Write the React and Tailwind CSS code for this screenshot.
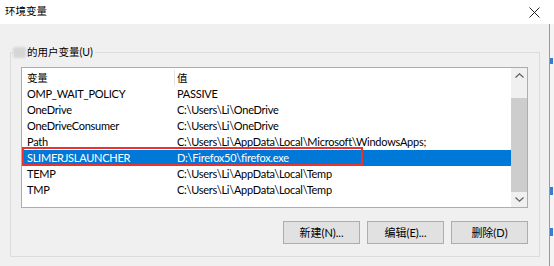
import React from 'react';

const rows = [
  ['OMP_WAIT_POLICY', 'PASSIVE'],
  ['OneDrive', 'C:\\Users\\Li\\OneDrive'],
  ['OneDriveConsumer', 'C:\\Users\\Li\\OneDrive'],
  ['Path', 'C:\\Users\\Li\\AppData\\Local\\Microsoft\\WindowsApps;'],
  ['SLIMERJSLAUNCHER', 'D:\\Firefox50\\firefox.exe'],
  ['TEMP', 'C:\\Users\\Li\\AppData\\Local\\Temp'],
  ['TMP', 'C:\\Users\\Li\\AppData\\Local\\Temp'],
];

function Btn({ children }) {
  return (
    <button className="w-[77px] h-[23px] bg-[#e1e1e1] border border-[#adadad] text-[11px] text-black leading-none">
      {children}
    </button>
  );
}

export default function App() {
  return (
    <div
      className="w-[554px] h-[266px] overflow-hidden flex flex-col bg-white text-black"
      style={{ fontFamily: 'Lato, "Noto Sans CJK SC", sans-serif' }}
    >
      {/* title bar */}
      <div className="h-[24px] flex items-center justify-between pl-[5px] pr-[14px] bg-white shrink-0">
        <span className="text-[10.5px]">环境变量</span>
        <svg width="11" height="11" viewBox="0 0 11 11" className="mt-[1px]">
          <path d="M0.5 0.5 L10.5 10.5 M10.5 0.5 L0.5 10.5" stroke="#222" strokeWidth="1" fill="none" />
        </svg>
      </div>

      <div className="flex flex-1">
        <div className="flex-1 bg-[#f0f0f0] pl-[10px] pr-[8px] pt-[28px]">
          {/* group box */}
          <div className="relative border border-[#dcdcdc] h-[205px] w-[530px] pl-[10px] pt-[14px]">
            <div className="absolute left-[2px] top-[-8px] flex items-center bg-[#f0f0f0] pr-[2px]">
              <span className="w-[13px] h-[11px] bg-[#d6d6d6] blur-[1px] rounded-[2px]" />
              <span className="text-[10.5px] leading-[14px] ml-[1px]">的用户变量(U)</span>
            </div>

            {/* list */}
            <div className="relative w-[507px] h-[141px] border border-[#adadad] bg-white flex">
              <div className="flex-1 pt-[1px] text-[11px] leading-[16px] tracking-[-0.25px]">
                <div className="flex h-[17px] items-center">
                  <div className="w-[152px] pl-[5px] text-[10.5px]">变量</div>
                  <div className="w-[1px] h-[16px] bg-[#e5e5e5]" />
                  <div className="pl-[2px] text-[10.5px]">值</div>
                </div>
                {rows.map(([k, v]) => {
                  const sel = k === 'SLIMERJSLAUNCHER';
                  return (
                    <div
                      key={k}
                      className={`flex h-[16px] items-center ${sel ? 'bg-[#0078d7] text-white' : ''}`}
                    >
                      <div className="w-[153px] pl-[5px] whitespace-nowrap">{k}</div>
                      <div className="pl-[2px] whitespace-nowrap">{v}</div>
                    </div>
                  );
                })}
              </div>

              {/* scrollbar */}
              <div className="w-[16px] bg-[#f0f0f0] flex flex-col items-center">
                <div className="h-[14px] flex items-center justify-center mt-[1px]">
                  <svg width="9" height="5" viewBox="0 0 9 5">
                    <path d="M0.5 4.5 L4.5 0.8 L8.5 4.5" stroke="#606060" strokeWidth="1.2" fill="none" />
                  </svg>
                </div>
                <div className="w-[16px] h-[95px] mt-[15px] bg-[#cdcdcd]" />
                <div className="flex-1" />
                <div className="h-[14px] flex items-center justify-center mb-[1px]">
                  <svg width="9" height="5" viewBox="0 0 9 5">
                    <path d="M0.5 0.5 L4.5 4.2 L8.5 0.5" stroke="#606060" strokeWidth="1.2" fill="none" />
                  </svg>
                </div>
              </div>

              {/* red highlight */}
              <div className="absolute left-[0px] top-[79px] w-[341px] h-[19px] border-2 border-[#e8332e]" />
            </div>

            {/* buttons */}
            <div className="w-[507px] flex justify-end gap-[7px] mt-[13px]">
              <Btn>新建(N)...</Btn>
              <Btn>编辑(E)...</Btn>
              <Btn>删除(D)</Btn>
            </div>
          </div>
        </div>

        {/* right edge strip */}
        <div className="w-[5px] border-l border-[#9a9a9a] bg-[#f4f4f4] flex flex-col">
          <div className="h-[6px] mt-[34px] w-[3px] bg-[#3a7cc9]" />
          <div className="h-[8px] mt-[123px] w-[3px] bg-[#3a7cc9]" />
          <div className="h-[8px] mt-[33px] w-[3px] bg-[#3a7cc9]" />
        </div>
      </div>
    </div>
  );
}
